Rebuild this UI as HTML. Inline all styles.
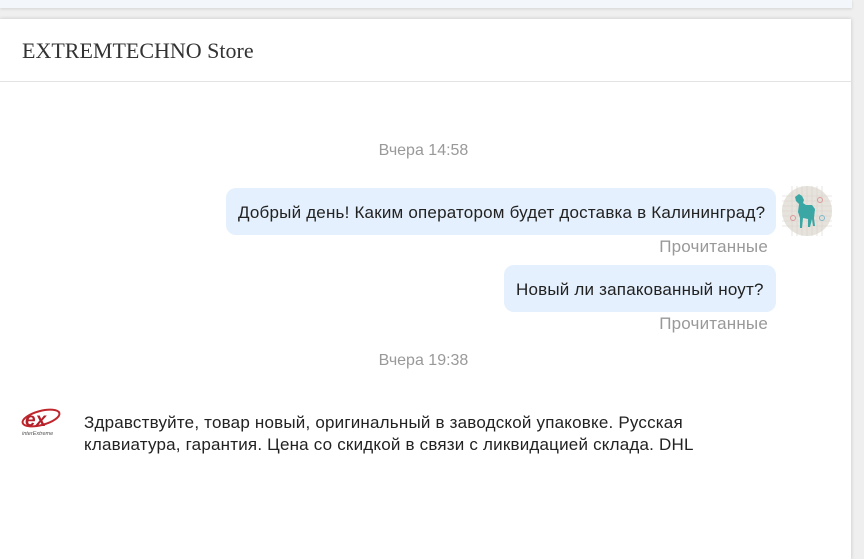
<!DOCTYPE html>
<html><head><meta charset="utf-8"><style>
html,body{margin:0;padding:0;width:864px;height:545px;overflow:hidden;background:#efefef;font-family:"Liberation Sans",Arial,sans-serif;}
.topstrip{position:absolute;left:0;top:0;width:852px;height:8px;background:#f3f7fb;box-shadow:0 1px 3px rgba(0,0,0,.12);}
.panel{position:absolute;left:0;top:19px;width:851px;height:540px;background:#fff;box-shadow:0 0 4px rgba(0,0,0,.18);}
.hdr{height:62px;border-bottom:1px solid #e3e3e3;font-family:"Liberation Serif",serif;font-size:22px;color:#333;line-height:64px;padding-left:22px;}
.time{position:absolute;width:100%;text-align:center;left:-2px;font-size:16px;color:#999;}
.b{position:absolute;background:#e4f0fd;border-radius:10px;font-size:17px;letter-spacing:0.2px;color:#222;line-height:49px;height:47px;box-sizing:border-box;padding:0 12px;white-space:nowrap;}
.read{position:absolute;right:83px;font-size:17px;letter-spacing:0.2px;color:#999;}
.msg{position:absolute;left:84px;top:393px;font-size:17px;letter-spacing:0.2px;color:#222;line-height:22px;width:640px;}
</style></head><body>
<div class="topstrip"></div>
<div class="panel">
<div class="hdr">EXTREMTECHNO Store</div>
<div class="time" style="top:123px">Вчера 14:58</div>
<div class="b" style="left:226px;top:169px;width:550px">Добрый день! Каким оператором будет доставка в Калининград?</div>
<svg style="position:absolute;left:782px;top:167px" width="50" height="50" viewBox="0 0 50 50">
<circle cx="25" cy="25" r="25" fill="#e6e2dc"/>
<g stroke="#d9d3cc" stroke-width="0.6"><path d="M0 10H50M0 15H50M0 20H50M0 25H50M0 30H50M0 35H50M0 40H50M10 0V50M15 0V50M20 0V50M25 0V50M30 0V50M35 0V50M40 0V50"/></g>
<path d="M17 8l3 2 2 4-1 3 3 2h6l3 4-1 9 1 8h-2l-1-7-2 8h-2l0-8-5-1-1 10h-2l0-10-2-6 1-8-3-3-1-4z" fill="#3aa7a5"/>
<circle cx="38" cy="14" r="2.5" fill="none" stroke="#d99a9a"/><circle cx="11" cy="32" r="2.5" fill="none" stroke="#d99a9a"/><circle cx="40" cy="32" r="2.5" fill="none" stroke="#7fb8c9"/>
</svg>
<div class="read" style="top:218px">Прочитанные</div>
<div class="b" style="left:504px;top:246px;width:272px">Новый ли запакованный ноут?</div>
<div class="read" style="top:295px">Прочитанные</div>
<div class="time" style="top:333px">Вчера 19:38</div>
<svg style="position:absolute;left:20px;top:385px" width="42" height="36" viewBox="0 0 42 36">
<ellipse cx="21" cy="14" rx="19" ry="7" fill="none" stroke="#c0272d" stroke-width="2" transform="rotate(-15 21 14)"/>
<text x="5" y="22" font-family="Liberation Sans" font-style="italic" font-weight="bold" font-size="19" fill="#b3202a">ex</text>
<text x="2" y="31" font-family="Liberation Sans" font-style="italic" font-size="5.5" fill="#555">interExtreme</text>
</svg>
<div class="msg">Здравствуйте, товар новый, оригинальный в заводской упаковке. Русская клавиатура, гарантия. Цена со скидкой в связи с ликвидацией склада. DHL</div>
</div>
</body></html>
